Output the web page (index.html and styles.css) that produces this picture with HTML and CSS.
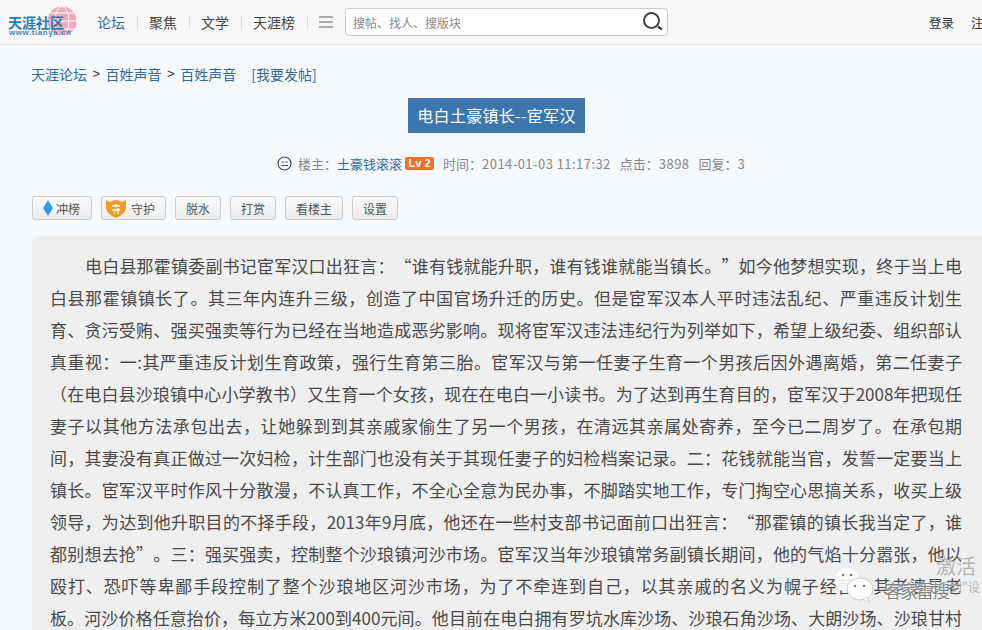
FILE: index.html
```html
<!DOCTYPE html>
<html lang="zh-CN">
<head>
<meta charset="utf-8">
<title>电白土豪镇长--宦军汉</title>
<link rel="stylesheet" href="styles.css">
</head>
<body>
<header class="topbar">
  <div class="logo">
    <svg class="globe" width="30" height="32" viewBox="0 0 30 32"><circle cx="15" cy="16" r="14.500" fill="#eea8bb"/><g fill="none" stroke="#fff" stroke-width="1"><ellipse cx="15" cy="16" rx="7" ry="14.500"/><path d="M1 16H30M3 8H27M3 24H27"/></g></svg>
    <span class="logo-name">天涯社区</span>
    <span class="logo-url">www.tianya.cn</span>
  </div>
  <nav class="nav">
    <a class="nav-item nav-active">论坛</a>
    <a class="nav-item">聚焦</a>
    <a class="nav-item">文学</a>
    <a class="nav-item">天涯榜</a>
    <span class="menu-icon"><i></i><i></i><i></i></span>
  </nav>
  <div class="search">
    <span class="search-text">搜帖、找人、搜版块</span>
    <svg width="22" height="22" viewBox="0 0 22 22"><circle cx="9.500" cy="9.500" r="7.500" fill="none" stroke="#444" stroke-width="2"/><path d="M16 15.500l4 3" stroke="#444" stroke-width="2.400"/></svg>
  </div>
  <div class="account"><a>登录</a><a>注册</a></div>
</header>
<main class="page">
  <div class="crumbs"><a>天涯论坛</a><b>&gt;</b><a>百姓声音</a><b>&gt;</b><a>百姓声音</a><a class="post-link">[我要发帖]</a></div>
  <div class="title-row"><h1 class="title">电白土豪镇长--宦军汉</h1></div>
  <div class="meta">
    <svg width="15" height="15" viewBox="0 0 15 15"><circle cx="7.500" cy="7.500" r="6.500" fill="none" stroke="#3b4a8c" stroke-width="1.200"/><path d="M4.500 6H7M8.500 6H11M4.500 9.500H11" stroke="#3b4a8c"/></svg>
    <span class="meta-owner">楼主&#65306;<a>土豪钱滚滚</a></span><span class="lv">Lv 2</span>
    <span class="meta-item">时间&#65306;<span class="num">2014-01-03 11:17:32</span></span>
    <span class="meta-item">点击&#65306;<span class="num">3898</span></span>
    <span class="meta-item">回复&#65306;<span class="num">3</span></span>
  </div>
  <div class="actions">
    <a class="btn btn-rank"><svg width="10" height="16" viewBox="0 0 10 16"><path d="M5 0L10 8L5 16L0 8Z" fill="#2f9ee8"/></svg>冲榜</a>
    <a class="btn btn-guard"><svg width="22" height="20" viewBox="0 0 22 20"><path d="M1 2L5 4Q11 0 17 4L21 2V11Q19 17 11 20Q3 17 1 11Z" fill="#f09a28"/><path d="M7 8H15M11 6V9M7 12H15M13 10V16M9 14L10 15" stroke="#fff" stroke-width="1.300" fill="none"/></svg>守护</a>
    <a class="btn">脱水</a>
    <a class="btn">打赏</a>
    <a class="btn">看楼主</a>
    <a class="btn">设置</a>
  </div>
  <article class="post">
    <p class="line line-first">电白县那霍镇委副书记宦军汉口出狂言&#65306;&#8220;谁有钱就能升职&#65292;谁有钱谁就能当镇长&#12290;&#8221;如今他梦想实现&#65292;终于当上电</p>
    <p class="line">白县那霍镇镇长了&#12290;其三年内连升三级&#65292;创造了中国官场升迁的历史&#12290;但是宦军汉本人平时违法乱纪&#12289;严重违反计划生</p>
    <p class="line">育&#12289;贪污受贿&#12289;强买强卖等行为已经在当地造成恶劣影响&#12290;现将宦军汉违法违纪行为列举如下&#65292;希望上级纪委&#12289;组织部认</p>
    <p class="line">真重视&#65306;一:其严重违反计划生育政策&#65292;强行生育第三胎&#12290;宦军汉与第一任妻子生育一个男孩后因外遇离婚&#65292;第二任妻子</p>
    <p class="line">&#65288;在电白县沙琅镇中心小学教书&#65289;又生育一个女孩&#65292;现在在电白一小读书&#12290;为了达到再生育目的&#65292;宦军汉于2008年把现任</p>
    <p class="line">妻子以其他方法承包出去&#65292;让她躲到到其亲戚家偷生了另一个男孩&#65292;在清远其亲属处寄养&#65292;至今已二周岁了&#12290;在承包期</p>
    <p class="line">间&#65292;其妻没有真正做过一次妇检&#65292;计生部门也没有关于其现任妻子的妇检档案记录&#12290;二&#65306;花钱就能当官&#65292;发誓一定要当上</p>
    <p class="line">镇长&#12290;宦军汉平时作风十分散漫&#65292;不认真工作&#65292;不全心全意为民办事&#65292;不脚踏实地工作&#65292;专门掏空心思搞关系&#65292;收买上级</p>
    <p class="line">领导&#65292;为达到他升职目的不择手段&#65292;2013年9月底&#65292;他还在一些村支部书记面前口出狂言&#65306;&#8220;那霍镇的镇长我当定了&#65292;谁</p>
    <p class="line">都别想去抢&#8221;&#12290;三&#65306;强买强卖&#65292;控制整个沙琅镇河沙市场&#12290;宦军汉当年沙琅镇常务副镇长期间&#65292;他的气焰十分嚣张&#65292;他以</p>
    <p class="line">殴打&#12289;恐吓等卑鄙手段控制了整个沙琅地区河沙市场&#65292;为了不牵连到自己&#65292;以其亲戚的名义为幌子经营&#65292;其老婆是老</p>
    <p class="line">板&#12290;河沙价格任意抬价&#65292;每立方米200到400元间&#12290;他目前在电白拥有罗坑水库沙场&#12289;沙琅石角沙场&#12289;大朗沙场&#12289;沙琅甘村</p>
  </article>
</main>
<div class="activate"><span class="act-big">激活</span><span class="act-small">转到"设</span></div>
<div class="watermark">
  <svg width="42" height="36" viewBox="0 0 42 36"><ellipse cx="13" cy="13" rx="12" ry="12" fill="#fff" fill-opacity=".9"/><ellipse cx="26" cy="22" rx="13" ry="11" fill="#fff" fill-opacity=".92" stroke="#999" stroke-opacity=".7" stroke-width=".7"/><path d="M33 30L36 35L28 32Z" fill="#fff" stroke="#999" stroke-opacity=".6" stroke-width=".6"/><g fill="#777"><circle cx="9" cy="8" r="1.300"/><circle cx="17" cy="8" r="1.300"/><circle cx="21" cy="19" r="1.200"/><circle cx="30" cy="19" r="1.200"/></g></svg>
  <span class="wm-name">客家雷搜</span>
</div>
</body>
</html>
```
FILE: styles.css
```css
* { box-sizing: border-box; }
html, body { margin: 0; height: 630px; overflow: hidden; }
body { width: 982px; background: #f6f9fb; font-family: "Noto Sans CJK SC", "Noto Sans", sans-serif; color: #555; position: relative; text-spacing-trim: space-all; }
.topbar { height: 45px; display: flex; align-items: center; background: #f7f7f7; border-bottom: 1px solid #e4e6e8; width: 982px; overflow: hidden; white-space: nowrap; }
.logo { position: relative; width: 97px; height: 44px; flex: none; }
.globe { position: absolute; left: 47px; top: 5px; }
.logo-name { position: absolute; left: 8px; top: 12px; font-size: 14px; line-height: 20px; font-weight: 700; color: #2a7cb5; }
.logo-url { position: absolute; left: 9px; top: 28px; font: 700 8px/10px "Liberation Sans", sans-serif; color: #4a86b0; letter-spacing: .55px; }
.nav { display: flex; align-items: center; flex: none; width: 248px; }
.nav-item { font-size: 14px; line-height: 14px; color: #444; padding-right: 12px; margin-right: 11px; border-right: 1px solid #ddd; }
.nav-active { color: #36699b; }
.menu-icon { display: flex; flex-direction: column; gap: 3px; width: 14px; }
.menu-icon i { display: block; height: 2px; background: #aaa; }
.search { flex: none; width: 323px; height: 28px; display: flex; align-items: center; justify-content: space-between; padding: 0 3px 0 7px; background: #fff; border: 1px solid #ccc; border-radius: 4px; }
.search-text { font-size: 12px; color: #888; }
.account { margin-left: 261px; flex: none; display: flex; gap: 17px; font-size: 12.500px; color: #333; }
.account a { flex: none; }
.page { padding: 18px 0 0 31px; }
.crumbs { display: flex; align-items: center; font-size: 14px; line-height: 20px; color: #36699b; height: 21px; }
.crumbs b { font-weight: 400; color: #333; margin: 0 5.500px; font-size: 13px; font-family: "Liberation Sans", sans-serif; }
.post-link { margin-left: 15px; }
.title-row { display: flex; justify-content: center; width: 931px; margin-top: 14px; }
.title { margin: 0; width: 177px; height: 35px; background: #3d76ad; color: #fff; font-size: 16px; font-weight: 400; line-height: 35px; text-align: center; white-space: nowrap; letter-spacing: .3px; }
.meta { display: flex; align-items: center; padding-left: 246px; margin-top: 20px; height: 20px; font-size: 13px; color: #888; white-space: nowrap; }
.meta a { color: #36699b; }
.meta svg { margin-right: 6px; }
.num { letter-spacing: .45px; }
.lv { margin-left: 3px; background: #f2702c; color: #fff; font: 700 11px/13px "Liberation Sans", sans-serif; padding: 0 3.500px; border-radius: 2px; }
.meta-item { margin-left: 9px; }
.actions { display: flex; gap: 9px; margin-top: 23px; height: 24px; padding-left: 1px; }
.btn { display: flex; align-items: center; gap: 3px; height: 24px; padding: 0 10px; font-size: 12px; color: #555; background: linear-gradient(#fafafa, #ececec); border: 1px solid #ccc; border-radius: 3px; white-space: nowrap; }
.btn-rank { padding-right: 11px; }
.btn-guard { padding-left: 3px; padding-right: 10px; gap: 4px; }
.post { width: 951px; height: 400px; margin-top: 16px; margin-left: 1px; padding: 14px 0 0 18px; background: #efefef; border-radius: 6px 0 0 0; overflow: hidden; }
.line { margin: 0; width: 912px; font-size: 17px; line-height: 32px; color: #4a4a4a; text-align: justify; text-align-last: justify; text-justify: inter-character; }
.line-first { text-indent: 35px; }
.watermark { position: absolute; left: 834px; top: 567px; display: flex; align-items: center; }
.wm-name { position: absolute; left: 50px; top: 10px; font-size: 18px; line-height: 26px; letter-spacing: -2px; color: rgba(110,110,110,.85); text-shadow: 0 0 2px #fff, 0 0 2px #fff; white-space: nowrap; }
.activate { position: absolute; left: 936px; top: 553px; width: 46px; color: #b4b4b4; overflow: hidden; white-space: nowrap; }
.act-big { display: block; font-size: 20px; line-height: 26px; }
.act-small { display: block; font-size: 12px; line-height: 16px; margin-left: 2px; }
```
